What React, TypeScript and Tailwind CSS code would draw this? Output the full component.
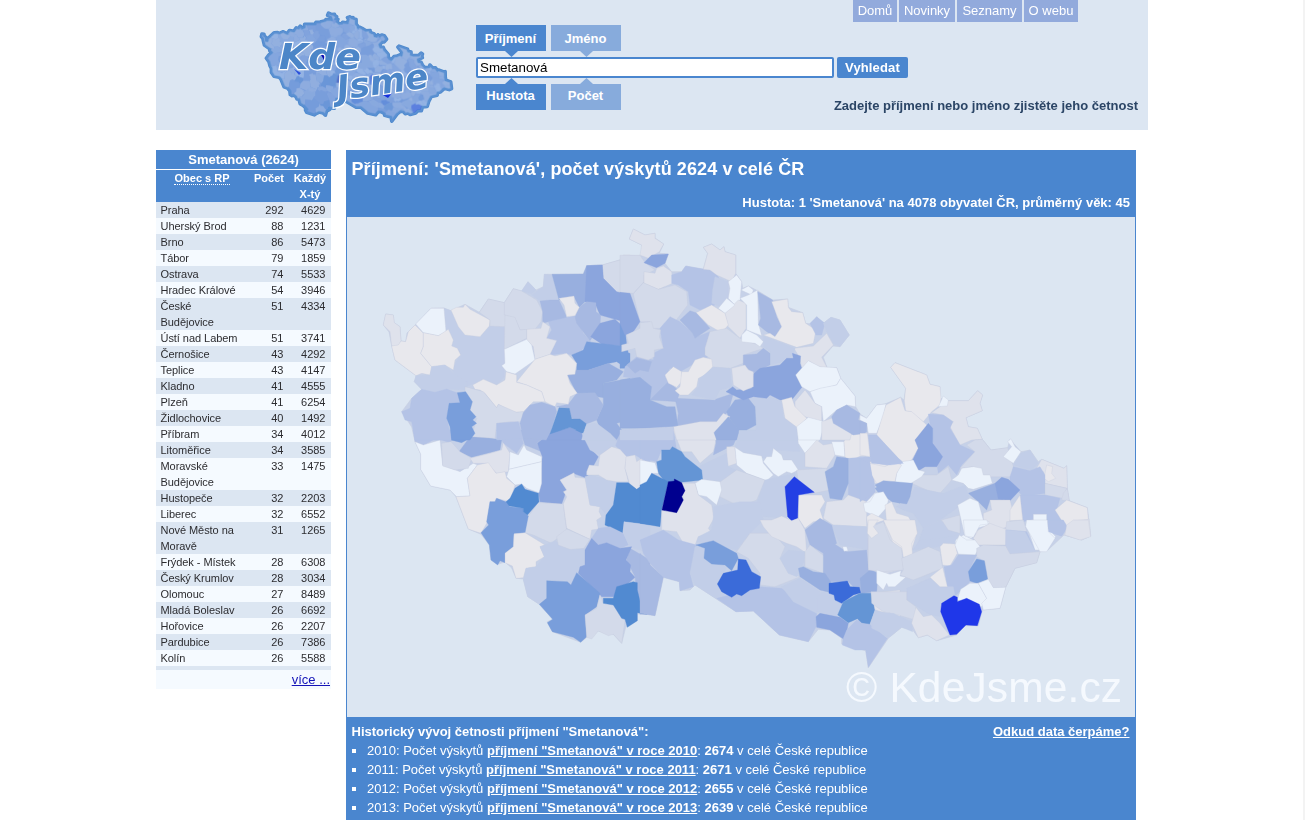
import React from 'react';

const OUTLINE =
  '385.7,314 393.3,315 394,322.7 400,326.7 401,341 405.7,341.7 407,333 415,325 431,308.3 444,308 451,310.7 465,304.3 479.3,312.3 488.3,299 504.3,302.7 513.3,288.7 521.7,291 528,281.7 536,290 543.3,286.7 544.3,274.3 583.3,274 586.7,265.7 602.3,265 622,259.3 623.3,255.3 645,255.7 641.7,245 629.3,239 633.3,229 645,235 655,233.3 655,238 663.7,244 659.3,253.3 668.3,254 665,263.3 671.7,271.7 681.7,271.7 685.7,266 703.3,269.3 707.7,253.3 703.3,247.3 711.7,244 720,250 724,246.7 725,251.7 735.7,255 735.7,273.3 741.7,281.7 742.7,288.3 748.3,286 757.7,290.7 772.7,300 787.7,299 788.3,307.3 802.7,312.7 805.7,323.3 811,324 816.7,316.7 823.3,323.3 831,317.3 840,320 849.3,335 840,346.7 833,346 823.3,357.3 827.3,368.3 836.7,367.7 840.7,378.3 855,396 855.7,406.7 860,414 866.7,418.3 876.7,405 885,404 900.7,397.3 904,400 905.7,388.3 890.7,367.3 895,362.7 926.7,375 930,384.3 940,386.7 940,398.3 948.3,400.7 968.3,400.7 977.7,390.7 982.7,395 980,403.3 982.3,410.7 966,417.7 968.3,426.7 977.3,428.3 982.3,439.3 991,450 1007.7,447.7 1010,439.3 1021,451.7 1030,450 1038.3,461.7 1041.7,459.3 1064,468.3 1066.7,465.7 1067.3,488.3 1069.3,500.7 1087.3,507.7 1090.7,536 1081.7,540 1064,535 1048,550 1040,551.7 1036.7,562.7 1015,568.3 1005.7,587.3 1000,608.3 982.3,610 978.3,625.7 965,625.7 956.7,635 936.7,640.7 927.3,635 918.3,637.7 912.7,630 901.7,627.3 888.3,638.3 868.3,667.7 865.7,650.7 841.7,644 841.7,638.3 830,630 818.3,629.3 808.3,641.7 779.3,635 753.3,611 736,611.7 695,585 690,590 680,590.7 679.3,581.7 663.3,577.3 655,615.7 646.7,614.3 637.3,614 637.3,620.7 625.7,627.3 621.7,643.3 613.3,634.3 598.3,631 586.7,637.3 580.7,642.3 552.3,631.7 547.3,621.7 552.7,619.3 539.3,604.3 527.7,596.7 523.3,579 516,578.3 511.7,568 505,562 497.7,564.3 491,560 489.3,545 481,534.3 468.3,529 456,496.7 450,490 430.7,486 420.7,469.3 420.7,454 415,441.7 411.7,427 401.7,411.7 411.7,398.3 421.7,389.3 414.3,381.7 416,375.7 395,360 391.7,346 389,332 383.3,325';

const SHADES: Record<string, string> = {
  a: '#ebf2fb',
  b: '#e8e8ed',
  c: '#dfe2ec',
  d: '#d3daea',
  e: '#c2cee8',
  f: '#b4c3e6',
  g: '#a7b9e2',
  h: '#98afdf',
  i: '#8ba5dd',
  j: '#799edb',
  k: '#6495d5',
  l: '#518ad1',
  m: '#3b6bd9',
  n: '#2340e4',
  o: '#00008f',
  p: '#1f37e9',
};

type Tile = { x: number; y: number; shapes: string[] };

// Each shape is "<shade> <points>", in thirds of a pixel from the tile's origin.
const TILES: Tile[] = [
  {
    x: 390,
    y: 430,
    shapes: [
      'f 70,0 185,0 183,40 155,30 130,30 100,45 75,35',
      'e 245,10 320,0 320,25 275,25',
      'f 320,0 390,0 400,40 380,70 340,40',
      'g 390,0 490,0 440,40 455,65 405,45',
      'j 185,0 245,0 240,25 215,38 183,30',
      'h 207,65 240,20 275,20 335,30 330,60 245,82',
      'f 600,0 780,0 780,100 735,75 708,80 680,50',
      'i 442,40 480,10 580,5 600,55 625,80 590,145 550,130 510,150 530,180 515,222 450,215 445,185 457,80',
      'k 480,10 510,0 590,0 570,10',
      'e 575,10 610,0 670,0 685,20 675,50 640,80 600,60',
      'a 75,35 100,45 150,30 158,105 210,125 250,100 262,105 232,145 240,198 200,200 180,180 122,168 92,118 92,72',
      'd 155,40 183,35 210,65 245,85 235,115 195,120 158,108',
      'c 240,85 300,70 335,60 340,38 360,70 355,125 320,130 290,100 250,100',
      'a 360,65 385,75 402,45 410,60 455,80 455,95 357,118',
      'a 357,118 455,95 455,160 447,188 410,175 395,162 375,165 350,140',
      'b 232,145 262,105 295,98 318,130 345,125 350,145 375,165 360,215 318,205 315,215 300,215 290,280 273,310 235,297 198,200 240,198',
      'd 405,308 412,262 445,218 520,222 530,300 485,340 430,315',
      'j 273,308 296,285 290,275 300,215 315,215 320,205 358,220 358,230 400,235 400,245 415,258 405,308 372,310 370,350 345,370 345,398 330,392 323,405 303,390 298,345',
      'l 360,205 375,175 395,162 405,178 445,190 447,215 412,255 400,245 400,235 358,228 348,215',
      'c 510,150 552,128 555,142 585,145 600,225 630,230 627,245 635,260 620,270 625,297 605,300 600,328 530,295 520,222 530,200 520,185 530,180',
      'e 585,140 600,135 680,155 670,225 645,250 630,230 600,225',
      'c 590,125 598,105 625,108 630,75 665,50 690,58 710,80 705,115 715,155 680,155 650,150 625,135 590,135',
      'c 708,80 735,75 740,95 755,85 758,103 780,100 775,160 740,178 720,165 705,115',
      'l 680,158 715,158 740,178 780,150 780,285 702,275 697,310 645,285 648,255 670,225',
      'b 372,312 405,308 465,345 450,350 463,380 438,395 438,410 408,415 400,443 378,445 367,408 345,398 345,370 370,350',
      'e 400,450 408,415 438,410 463,380 450,350 495,332 545,360 582,355 585,405 565,415 545,465 530,452 470,450 470,505 448,523 413,500',
      'd 500,320 530,297 600,328 582,355 540,358 505,345',
      'f 605,325 625,295 660,290 700,310 715,345 690,355 650,338 625,345',
      'e 702,275 780,285 780,370 720,350 700,310',
      'g 710,390 720,355 780,390 780,553 750,553 735,440',
      'i 585,360 605,325 625,345 650,338 690,355 725,350 708,390 722,405 720,425 735,442 670,500 635,500 565,430 570,410 585,405',
      'j 470,452 532,455 543,465 560,428 630,490 620,530 585,555 590,620 572,637 550,622 487,605 472,578 488,568 448,523 470,505',
      'd 585,555 620,535 630,495 640,520 670,525 695,565 705,570 695,640 670,613 655,617 625,603 605,627 590,622',
      'l 640,505 670,505 680,470 730,455 742,458 742,480 750,513 768,515 770,553 742,548 742,572 712,592 705,568 695,565 670,525 640,520',
    ],
  },
  {
    x: 370,
    y: 220,
    shapes: [
      'c 47,282 70,285 73,308 90,320 93,363 85,378 65,378 60,335 40,315',
      'b 85,375 93,363 107,365 115,335 135,315 160,340 160,380 152,400 185,440 180,465 155,460 138,467 75,420 65,378',
      'e 222,265 243,272 285,345 330,350 360,315 403,320 403,470 378,498 345,478 315,490 285,500 245,450 270,405 248,378 250,360 228,330',
      'a 137,312 183,265 222,265 228,335 205,347 160,338',
      'b 160,338 205,347 235,328 250,360 245,378 262,385 272,405 255,420 250,450 225,435 185,440 152,400 160,380',
      'b 243,270 260,262 280,262 285,253 300,268 360,300 358,318 330,350 285,345 265,320',
      'd 328,277 355,237 403,248 405,285 440,325 405,320 360,318 360,300',
      'd 403,248 430,206 455,213 500,240 518,275 513,305 495,328 450,330 435,295 403,285',
      'e 455,213 474,185 498,210 485,222',
      'e 485,225 520,200 523,163 546,165 567,240 510,243',
      'h 546,163 640,162 650,137 697,135 700,200 645,245 628,262 612,230 567,240',
      'd 697,135 757,118 760,106 780,106 780,225 740,215 700,175',
      'i 650,137 697,135 700,175 740,215 780,225 780,310 735,298 690,285 675,250 645,245',
      'g 510,243 540,240 567,240 590,290 585,315 535,305 518,310 518,275',
      'f 535,305 615,287 640,340 662,365 635,390 605,405 585,400 540,405 560,360 530,355 545,330',
      'g 628,262 650,245 678,248 678,275 692,285 690,320 660,362 620,310 615,290',
      'b 567,235 612,228 615,250 628,262 615,287 590,290 582,255',
      'd 405,285 435,292 450,330 470,328 470,355 403,388',
      'c 470,328 513,325 518,305 540,320 530,355 560,362 540,403 495,418 490,380 470,360',
      'a 403,388 470,358 485,375 495,420 435,462 410,455 395,437 405,430',
      'i 662,350 690,310 735,298 770,330 755,378 700,375',
      'j 605,405 640,390 650,365 755,378 755,395 780,400 780,445 755,435 740,425 718,430 655,450 620,450 620,430',
      'h 592,465 620,450 655,450 715,430 760,455 740,480 700,490 710,535 620,520',
      'h 700,490 780,475 780,600 740,610 755,630 740,660 720,655 690,625 680,600 700,555',
      'g 560,560 595,553 620,520 675,518 700,555 680,600 650,612 605,595 598,565',
      'b 440,485 495,418 540,403 555,408 590,400 620,430 615,463 592,465 600,490 622,520 600,530 595,553 560,548 555,560 525,545 515,515 470,495',
      'b 308,495 340,478 380,495 405,480 408,455 440,465 440,487 470,495 515,515 525,545 490,545 480,555 460,575 430,577 385,553 380,563 345,520 330,510 315,508',
      'e 133,485 138,467 180,465 185,440 225,435 250,460 290,485 290,510 230,507 195,517 155,508',
      'f 155,508 195,517 230,507 265,520 270,548 235,550 230,595 245,660 135,660 125,605 105,600 95,575 120,565 125,535',
      'd 285,500 340,515 380,563 385,553 440,577 460,575 455,605 420,605 380,610 375,655 305,650 320,595 300,570 308,545 285,515',
      'j 262,518 287,515 307,545 300,570 318,590 308,600 320,610 305,620 315,640 300,660 245,660 240,620 230,595 237,550 270,548',
      'f 380,610 445,605 460,655 380,660',
      'g 460,578 480,555 515,547 555,560 560,575 540,640 530,660 460,655 450,610',
      'i 540,640 600,622 635,640 635,660 530,660',
      'k 567,563 598,565 605,597 630,597 650,612 640,640 600,622 540,642',
      'e 640,640 650,612 680,610 720,640 740,660 635,660',
    ],
  },
  {
    x: 640,
    y: 430,
    shapes: [
      'f 0,0 100,0 110,60 65,60 50,95 0,85',
      'c 100,0 225,0 228,30 220,65 180,100 155,65 125,65',
      'e 300,0 470,0 480,65 410,60 380,85 330,80 285,50',
      'g 225,0 300,0 280,45 220,75 228,40',
      'c 260,50 285,50 290,100 260,110',
      'e 175,110 260,70 265,110 290,120 245,155 190,150',
      'k 50,95 65,90 65,60 90,60 97,50 125,65 135,80 185,120 188,150 110,158 75,155 55,130',
      'a 285,52 310,68 365,78 370,100 400,135 380,152 320,130 290,105',
      'a 370,95 380,80 395,80 400,55 425,75 430,90 455,90 475,120 455,130 440,125 415,140 400,130',
      'a 470,0 545,0 535,35 495,70 475,40',
      'c 495,70 530,30 550,45 580,40 585,75 560,115 495,110',
      'a 575,35 612,35 615,80 585,75',
      'b 612,35 620,15 680,10 692,75 660,78 630,95 615,80',
      'a 0,90 45,98 55,130 35,130 15,170 0,170',
      'l 0,165 20,155 35,130 85,155 65,240 60,290 0,280',
      'd 235,160 290,120 375,150 350,210 300,230 240,200',
      'e 375,150 465,130 475,160 440,170 440,265 370,260 350,220',
      'd 470,120 560,115 570,180 520,190 475,155',
      'a 165,160 185,148 240,155 245,180 230,225 200,200 175,195',
      'f 625,85 690,80 700,130 705,185 680,215 625,195',
      'h 555,125 580,110 590,80 625,85 625,160 605,210 570,205',
      'c 110,248 130,210 125,160 165,160 175,195 215,225 222,265 205,295 215,310 175,320 165,345 130,340 110,305 65,300 65,242',
      'o 85,155 103,153 103,147 125,158 135,182 125,200 130,210 110,248 66,240',
      'e 220,230 300,215 360,215 370,270 330,310 290,360 170,335 175,320 215,300 220,260',
      'b 475,195 545,195 555,215 540,240 550,270 520,275 495,295 475,265',
      'n 435,170 463,140 523,187 475,195 473,265 455,272 443,260',
      'c 560,215 610,210 625,195 680,215 680,290 580,285 550,265',
      'd 290,365 330,310 400,310 435,350 420,385 445,430 480,440 405,470 360,465 360,430 325,385',
      'c 360,270 395,270 425,258 455,272 475,265 495,300 500,370 470,350 440,340 395,320 370,290',
      'e 575,285 680,290 685,360 600,345',
      'g 495,300 540,265 575,285 590,340 550,370 510,345',
      'b 690,95 760,110 780,125 740,160 705,160',
      'h 705,175 740,155 780,160 780,220 725,200',
      'a 670,225 705,190 745,215 720,255 690,245',
      'd 685,330 740,275 780,345 780,420 740,430 685,415',
      'f 0,330 70,300 115,330 170,345 165,380 150,430 160,470 120,482 118,455 70,442 30,400 10,370',
      'g 0,370 25,400 70,442 45,557 0,550',
      'e 165,350 195,345 200,390 260,410 245,440 230,465 285,505 340,543 288,545 165,465 150,430',
      'j 168,345 220,332 290,370 295,385 275,422 255,405 215,402 192,385 195,355',
      'e 420,385 445,360 495,365 490,400 470,440 445,430',
      'd 495,365 510,345 555,380 550,430 495,410',
      'f 230,505 270,495 360,470 425,475 530,550 528,590 505,635 418,615 340,543 288,545',
      'e 425,470 480,445 540,485 530,550 460,515',
      'g 550,370 580,340 620,365 680,360 685,415 715,430 710,480 660,490 625,455 570,455 550,430',
      'h 475,415 490,410 520,425 555,430 575,460 567,487 540,480 480,440',
      'h 660,445 690,420 712,430 710,485 665,490',
      'm 232,462 250,430 293,420 295,387 318,390 335,425 362,440 358,475 330,480 305,497 290,492 275,502 245,485',
      'e 530,505 545,485 570,490 605,520 595,560 530,545',
      'i 528,560 540,550 600,562 625,580 615,630 570,600 530,592',
      'm 567,460 622,453 630,470 658,472 662,488 640,495 605,520 585,510 582,495 567,490',
      'f 620,600 650,570 690,582 742,625 685,712 677,660 645,660 607,645 610,625',
      'k 593,555 610,515 660,490 695,490 705,540 690,582 665,578 652,566 625,578',
      'c 695,490 780,480 780,560 705,540',
      'e 690,582 705,540 780,570 780,590 742,625',
      'a 608,350 620,350 624,362 612,364',
    ],
  },
  {
    x: 620,
    y: 220,
    shapes: [
      'c 28,57 40,27 75,45 105,40 105,55 131,72 118,95 85,115 60,105 65,75',
      'd 0,106 60,106 75,128 105,150 72,165 72,185 40,220 0,217',
      'i 72,128 95,105 145,102 135,130 110,143',
      'c 72,155 105,160 110,145 130,138 155,155 158,190 115,208 72,190',
      'd 40,222 70,188 115,208 165,195 200,215 203,255 150,325 95,325 90,305 60,305',
      'f 155,165 185,155 197,138 285,153 300,180 280,215 285,255 240,270 210,255 205,215 175,195 155,190',
      'c 250,148 263,100 250,82 275,72 300,90 312,80 315,95 347,105 347,160 335,185 290,165 270,150',
      'e 285,170 325,185 325,235 300,260 275,250 278,210',
      'a 325,185 350,165 365,185 360,240 345,255 325,235 330,205',
      'a 363,210 385,198 400,210 395,225',
      'c 315,280 355,240 378,250 378,325 360,355 325,320',
      'a 360,235 385,225 413,210 415,310 425,347 380,330 380,255',
      'a 295,265 320,235 345,255 315,280',
      'b 228,278 275,255 315,280 325,315 305,338 265,315',
      'g 413,215 458,240 470,290 485,320 465,350 440,335 415,315 422,295',
      'b 455,245 503,237 505,262 515,275 548,278 557,310 588,330 580,370 530,382 430,345 450,340 465,350 485,320 470,285',
      'f 570,310 590,290 615,310 605,345 588,345',
      'e 610,310 633,292 660,300 688,345 660,380 640,370 620,335',
      'c 522,385 580,378 620,340 640,375 605,412 622,445 595,440 570,425 545,445 540,415',
      'j 0,310 15,325 20,375 25,400 15,445 0,445',
      'i 0,217 30,220 60,305 40,335 15,345 0,310',
      'f 120,325 150,290 180,305 230,350 270,335 255,385 265,410 225,430 180,455 150,445 135,470 145,485 115,520 90,540 95,500 70,480 10,470 15,440 50,410 100,420 100,400 130,385',
      'g 20,435 50,415 95,425 85,455 60,450 45,460',
      'd 20,345 60,325 60,308 95,305 100,325 122,330 118,350 130,385 103,390 103,410 85,420 50,410 45,385 5,395 5,375 25,370',
      'g 180,300 210,272 228,278 270,325 225,355 218,340',
      'd 255,385 270,335 320,325 360,355 415,375 430,385 370,405 370,430 330,445 275,440 270,415 255,405',
      'e 430,348 525,385 520,405 490,425 450,435 450,395 430,380',
      'g 370,405 410,402 430,385 450,400 450,435 400,460 370,435',
      'a 365,345 380,330 410,345 430,365 420,380 405,370 365,365',
      'g 165,535 280,540 340,520 325,575 290,605 240,605 195,625 170,620 175,580',
      'g 90,540 145,485 180,515 170,545',
      'e 375,535 450,530 485,545 490,590 530,610 535,660 360,660 355,630 408,630 405,560',
      'h 320,575 345,540 385,535 405,560 408,615 380,630 355,630 325,590',
      'i 400,462 420,445 480,435 500,415 520,415 517,400 542,408 540,430 547,450 528,465 547,500 515,540 480,540 450,525 440,535 400,530 370,540 318,515 338,500 350,510 395,505',
      'b 135,465 160,440 185,455 185,485 170,502 145,490',
      'b 185,455 205,455 225,420 250,412 275,418 278,440 255,465 235,475 230,500 205,525 180,525 165,512 180,500',
      'e 215,525 235,500 240,475 280,442 330,445 335,500 300,510 285,540',
      'c 335,445 375,435 385,450 400,455 400,500 370,513 340,495',
      'h 0,480 60,472 95,500 90,540 140,560 165,560 175,625 0,625',
      'a 527,465 565,422 600,440 650,443 662,475 650,495 570,515 545,500',
      'a 570,515 600,505 650,495 662,475 705,528 707,560 680,555 650,570 610,605 605,560 585,550',
      'c 525,545 555,510 585,550 605,560 605,605 555,590 525,570',
      'b 485,540 515,532 525,560 560,595 535,625 495,595',
      'a 530,620 565,592 615,605 600,660 535,660',
      'c 605,605 635,595 695,640 690,660 605,660',
      'g 635,590 650,570 680,555 720,580 715,600 740,610 735,640 700,645 640,610',
      'e 0,630 160,620 160,660 0,660',
      'c 160,620 240,605 290,605 310,580 330,590 285,635 290,660 170,660',
      'h 282,638 325,590 357,630 350,660 290,660',
    ],
  },
  {
    x: 860,
    y: 350,
    shapes: [
      'a 0,195 20,205 50,165 78,162 70,200 50,250 25,250 20,220 0,210',
      'g 0,212 20,220 20,245 0,255',
      'c 215,188 265,152 325,152 353,122 368,135 360,160 367,182 318,203 325,230 352,235 367,268 335,270 300,285 270,230 280,215 250,195',
      'b 78,165 122,142 135,182 160,185 190,215 205,230 165,270 175,295 155,330 135,340 115,325 50,255',
      'b 92,52 105,38 200,75 210,103 240,110 243,145 240,165 215,185 190,215 155,185 137,182 133,152 137,115',
      'a 240,160 250,138 265,150 262,168 235,170',
      'f 205,192 250,195 278,215 270,235 300,285 345,305 305,345 290,375 265,345 235,370 230,340 215,250',
      'i 165,270 205,220 218,235 218,280 248,320 230,350 195,350 175,362 158,330 175,295',
      'd 300,355 345,305 320,285 345,270 367,268 393,300 443,293 460,350 455,380 370,380 340,350',
      'a 430,320 455,290 443,275 453,266 465,290 483,305 460,340',
      'e 460,345 483,310 510,300 535,340 515,360',
      'c 530,355 545,328 612,355 620,347 622,415 555,400 550,365',
      'b 560,345 578,350 575,370 587,385 565,395 552,385',
      'f 450,380 460,350 510,362 540,350 555,375 555,430 490,440 450,400',
      'd 555,400 620,415 610,445 555,435',
      'd 610,430 622,415 628,452 605,450',
      'h 325,430 405,400 430,400 430,450 390,450 380,480 355,455',
      'i 405,400 425,382 445,388 480,420 450,452 415,447',
      'a 275,390 295,375 305,355 340,350 365,355 370,375 390,375 397,400 340,418 325,415 310,400',
      'f 480,435 555,435 600,445 590,480 620,535 605,558 580,550 545,530 545,500 490,515',
      'b 585,480 620,450 682,473 685,510 645,515 620,535',
      'c 620,540 645,512 688,508 692,558 665,570 612,555',
      'c 390,450 450,450 458,480 445,530 410,540 370,530 370,490 395,480',
      'b 450,480 480,435 488,510 450,512',
      'd 155,400 180,375 230,375 265,350 275,390 240,430 200,420',
      'e 110,470 150,440 165,410 200,420 250,430 315,405 328,440 290,475 240,510 190,535 160,490 130,480',
      'a 105,400 110,370 125,335 160,330 175,360 195,365 185,380 145,405',
      'b 28,340 75,350 105,335 125,345 110,370 105,395 50,400 35,375',
      'f 25,255 50,255 115,325 130,340 90,345 35,340 30,320',
      'b 0,250 22,250 30,320 0,315',
      'f 0,325 30,340 40,400 45,425 0,455',
      'h 45,405 70,392 158,400 150,440 140,462 95,455',
      'a 10,460 30,455 45,430 70,425 85,450 78,475 55,500 15,485',
      'b 75,465 95,455 110,490 145,500 172,545 155,600 105,600 80,520',
      'b 20,500 35,490 75,510 45,520 55,550 40,565 25,545',
      'e 190,535 240,510 300,550 260,590 170,590',
      'd 245,510 300,495 300,550 265,540',
      'a 293,465 330,445 355,455 370,510 387,515 385,525 350,535 335,565 315,560',
      'c 345,545 385,525 410,540 437,535 437,585 360,585',
      'd 440,515 490,510 500,545 437,540',
      'f 437,540 500,545 525,600 437,600',
      'a 500,525 520,525 520,493 560,493 560,530 587,560 560,600 525,600',
      'a 285,570 310,555 360,580 350,600 290,600',
    ],
  },
  {
    x: 840,
    y: 520,
    shapes: [
      'd 85,25 130,5 150,60 185,85 190,150 130,155 85,150',
      'b 85,0 115,0 100,20 115,40 95,55 82,40',
      'b 130,0 225,0 232,40 215,70 218,110 190,112 185,80 158,60',
      'e 218,90 240,60 300,55 355,45 340,75 305,75 270,85',
      'd 185,115 265,80 300,95 308,145 220,180 180,165 190,150',
      'b 300,80 310,70 345,72 352,100 330,138 308,135',
      'a 370,0 440,0 445,12 420,15 400,52 375,48',
      'c 400,55 415,30 450,10 498,28 497,75 415,75',
      'a 345,75 358,45 380,60 405,60 420,80 405,105 355,102',
      'e 497,30 555,35 587,95 510,102 497,80',
      'f 622,0 670,0 682,20 665,48 625,35',
      'a 560,0 622,0 625,35 645,55 620,95 600,95 575,50 557,20',
      'c 680,15 700,0 745,0 752,50 720,60 675,45',
      'd 410,85 430,75 497,78 510,102 600,95 590,128 525,145 497,202 460,203 443,178 435,125 410,110',
      'f 312,140 335,135 355,105 410,105 385,155 390,185 360,215 345,228 322,200',
      'j 385,155 410,117 433,122 443,178 410,190 390,183',
      'a 352,240 362,208 390,190 415,190 440,235 425,260 395,250',
      'a 415,190 445,178 460,203 497,202 480,265 430,270 425,250 440,235',
      'e 200,205 275,172 300,200 340,200 345,228 305,250 305,290 270,285 200,240',
      'b 270,172 308,142 322,200 300,200',
      'd 93,215 200,215 200,240 228,260 225,300 175,285 130,275 95,250',
      'a 110,150 150,163 183,152 180,168 197,172 165,200 145,200 140,190 130,210 110,190',
      'e 95,310 110,275 160,280 215,305 218,335 185,322 150,350 95,325',
      'c 228,262 250,290 275,285 300,310 328,345 290,362 262,345 235,353 215,310',
      'p 305,250 342,227 352,232 352,245 380,235 418,253 425,275 412,317 378,315 350,343 330,345 302,275',
    ],
  },
];

function Regions({ edge }: { edge: string }) {
  return (
    <>
      {TILES.map((t) => (
        <g key={`${t.x}-${t.y}`} transform={`translate(${t.x} ${t.y}) scale(0.33333)`}>
          {t.shapes.map((s) => (
            <polygon
              key={s}
              points={s.slice(2)}
              fill={SHADES[s[0]]}
              stroke={s[0] < 'e' ? edge : SHADES[s[0]]}
              strokeWidth={1}
            />
          ))}
        </g>
      ))}
    </>
  );
}

function CountryMap() {
  return (
    <svg className="block h-[500px] w-full" viewBox="347 217 788 500">
      <polygon points={OUTLINE} fill="#c6d1e8" stroke="#c8cee1" strokeWidth="0.6" />
      <Regions edge="#c6cbdf" />
      <text
        x="846"
        y="702"
        fontSize="42.5"
        textLength="276"
        fill="#f5f9fe"
        fontFamily='"Liberation Sans", Arial, sans-serif'
      >
        © KdeJsme.cz
      </text>
    </svg>
  );
}

function Logo() {
  return (
    <svg className="block h-[118px] w-[200px]" viewBox="256 8 200 118">
      <g transform="translate(158.2 -43.6) scale(0.269 0.247)">
        <polygon points={OUTLINE} fill="#7d9fda" stroke="#4f8acd" strokeWidth="13" strokeLinejoin="round" />
        <g opacity="0.42">
          <Regions edge="#9db3e2" />
        </g>
        <polygon points={OUTLINE} fill="#6a98dc" fillOpacity="0.35" stroke="#5a90d2" strokeWidth="7" strokeLinejoin="round" />
      </g>
      <polygon points="321,55 326,53 324,60" fill="#0a0ab0" />
      <polygon points="294,69 301,73 299,75" fill="#2b50dc" />
      <polygon points="383,95 392,93 388,98" fill="#1530dd" />
      <g
        fontFamily='"DejaVu Sans", Verdana, sans-serif'
        fontStyle="italic"
        fontWeight="bold"
        fill="#4c86c8"
        stroke="#ffffff"
        strokeWidth="2.4"
        paintOrder="stroke"
      >
        <text x="279" y="68.5" fontSize="36" textLength="82" lengthAdjust="spacingAndGlyphs">
          Kde
        </text>
        <text
          fontSize="34"
          textLength="92"
          lengthAdjust="spacingAndGlyphs"
          transform="translate(338.5 100) rotate(-8)"
        >
          Jsme
        </text>
      </g>
    </svg>
  );
}

const CITIES: [string, number, number][] = [
  ['Praha', 292, 4629],
  ['Uherský Brod', 88, 1231],
  ['Brno', 86, 5473],
  ['Tábor', 79, 1859],
  ['Ostrava', 74, 5533],
  ['Hradec Králové', 54, 3946],
  ['České Budějovice', 51, 4334],
  ['Ústí nad Labem', 51, 3741],
  ['Černošice', 43, 4292],
  ['Teplice', 43, 4147],
  ['Kladno', 41, 4555],
  ['Plzeň', 41, 6254],
  ['Židlochovice', 40, 1492],
  ['Příbram', 34, 4012],
  ['Litoměřice', 34, 3585],
  ['Moravské Budějovice', 33, 1475],
  ['Hustopeče', 32, 2203],
  ['Liberec', 32, 6552],
  ['Nové Město na Moravě', 31, 1265],
  ['Frýdek - Místek', 28, 6308],
  ['Český Krumlov', 28, 3034],
  ['Olomouc', 27, 8489],
  ['Mladá Boleslav', 26, 6692],
  ['Hořovice', 26, 2207],
  ['Pardubice', 26, 7386],
  ['Kolín', 26, 5588],
];

const HISTORY: [number, number][] = [
  [2010, 2674],
  [2011, 2671],
  [2012, 2655],
  [2013, 2639],
];

function Tab({ label, active, up }: { label: string; active?: boolean; up?: boolean }) {
  const tone = active ? 'bg-[#4a86cf]' : 'bg-[#87abdc]';
  const arrow = active ? 'text-[#4a86cf]' : 'text-[#87abdc]';
  return (
    <div className={`relative h-[26px] w-[70px] pr-px text-center text-[13px] font-bold text-white ${tone}`}>
      <span className={up ? 'block leading-[24px]' : 'block leading-[27px]'}>{label}</span>
      <svg
        className={`absolute left-[29px] h-[6px] w-[13px] ${arrow} ${up ? '-top-[6px]' : '-bottom-[6px]'}`}
        viewBox="0 0 13 6"
      >
        <polygon points={up ? '0,6 6.5,0 13,6' : '0,0 6.5,6 13,0'} fill="currentColor" />
      </svg>
    </div>
  );
}

function Header() {
  return (
    <header className="flex h-[130px] w-[992px] bg-[#dce6f2]">
      <div className="w-[320px] pt-2 pl-[100px]">
        <Logo />
      </div>
      <div className="flex flex-1 flex-col pr-[10px]">
        <nav className="flex h-[22px] justify-end gap-[2px] pr-[60px] text-[13px] leading-[21px] text-white">
          <a className="w-[44px] bg-[#92aadc] text-center">Domů</a>
          <a className="w-[56px] bg-[#92aadc] text-center">Novinky</a>
          <a className="w-[65px] bg-[#92aadc] text-center">Seznamy</a>
          <a className="w-[54px] bg-[#92aadc] text-center">O webu</a>
        </nav>
        <div className="mt-[3px] flex gap-[5px]">
          <Tab label="Příjmení" active />
          <Tab label="Jméno" />
        </div>
        <div className="mt-[6px] flex gap-[3px]">
          <div className="h-[21px] w-[358px] rounded-[2px] border-2 border-[#4a86cf] bg-white pl-[2px] text-[13.33px] leading-[18px] text-black">
            Smetanová
          </div>
          <button className="h-[21px] w-[71px] rounded-[2px] bg-[#4a86cf] text-[13px] leading-[21px] font-bold tracking-[0.15px] text-white">
            Vyhledat
          </button>
        </div>
        <div className="mt-[6px] flex justify-between">
          <div className="flex gap-[5px]">
            <Tab label="Hustota" active up />
            <Tab label="Počet" up />
          </div>
          <p className="pt-[13px] text-[13px] leading-[17px] font-bold whitespace-nowrap text-[#2b4566]">
            Zadejte příjmení nebo jméno zjistěte jeho četnost
          </p>
        </div>
      </div>
    </header>
  );
}

function CityTable() {
  return (
    <aside className="w-[175px] shrink-0">
      <h2 className="h-[19px] bg-[#4a86cf] text-center text-[13px] leading-[19px] font-bold text-white">
        Smetanová (2624)
      </h2>
      <div className="mt-px flex h-8 bg-[#4a86cf] text-[11px] leading-4 font-bold text-white">
        <div className="w-[92px] text-center">
          <span className="inline-block h-[15px] border-b border-dotted border-white">Obec s RP</span>
        </div>
        <div className="w-[36px] text-right">Počet</div>
        <div className="w-[47px] pl-[5px] text-center">
          Každý
          <br />
          X-tý
        </div>
      </div>
      {CITIES.map(([name, count, every], i) => (
        <div
          key={name}
          className={`flex text-[11px] leading-4 text-[#2c2c30] ${i % 2 ? 'bg-[#f5faff]' : 'bg-[#dce6f2]'}`}
        >
          <div className="w-[92px] pr-[6px] pl-[4.5px] tracking-[-0.05px]">{name}</div>
          <div className="w-[35.5px] text-right">{count}</div>
          <div className="w-[42px] text-right">{every}</div>
        </div>
      ))}
      <div className="h-1 bg-[#dce6f2]" />
      <div className="h-[19px] bg-[#f5faff] pr-px text-right text-[13px] leading-[19px]">
        <a className="text-[#1414b8] underline">více ...</a>
      </div>
    </aside>
  );
}

function MapPanel() {
  return (
    <main className="h-[670px] w-[790px] shrink-0 overflow-hidden bg-[#4a86cf] text-white">
      <div className="h-[67px] px-[6px] pt-[8px] font-bold">
        <h1 className="-ml-[0.5px] text-[18px] leading-[22px] font-bold tracking-[0.1px]">
          Příjmení: 'Smetanová', počet výskytů 2624 v celé ČR
        </h1>
        <p className="mt-[15px] text-right text-[13px] leading-4">
          Hustota: 1 'Smetanová' na 4078 obyvatel ČR, průměrný věk: 45
        </p>
      </div>
      <div className="mx-px bg-[#dce6f2]">
        <CountryMap />
      </div>
      <div className="pt-[5px] pr-[5px] pl-[5.5px] text-[13px] leading-[19px]">
        <div className="flex justify-between pr-[1.5px] font-bold">
          <span>Historický vývoj četnosti příjmení "Smetanová":</span>
          <a className="underline">Odkud data čerpáme?</a>
        </div>
        <ul>
          {HISTORY.map(([year, count]) => (
            <li key={year} className="flex items-center">
              <span className="mr-[11.5px] h-1 w-1 bg-white" />
              <span>
                {year}: Počet výskytů <a className="font-bold underline">příjmení "Smetanová" v roce {year}</a>:{' '}
                <b>{count}</b> v celé České republice
              </span>
            </li>
          ))}
        </ul>
      </div>
    </main>
  );
}

export default function App() {
  return (
    <div className="flex h-[820px] w-[1305px] justify-between overflow-hidden bg-white font-['Liberation_Sans',Arial,sans-serif]">
      <div className="w-[1148px] pl-[156px]">
        <Header />
        <div className="mt-5 flex items-start gap-[15px]">
          <CityTable />
          <MapPanel />
        </div>
      </div>
      <div className="w-[2px] bg-[#f3f3f3]" />
    </div>
  );
}
